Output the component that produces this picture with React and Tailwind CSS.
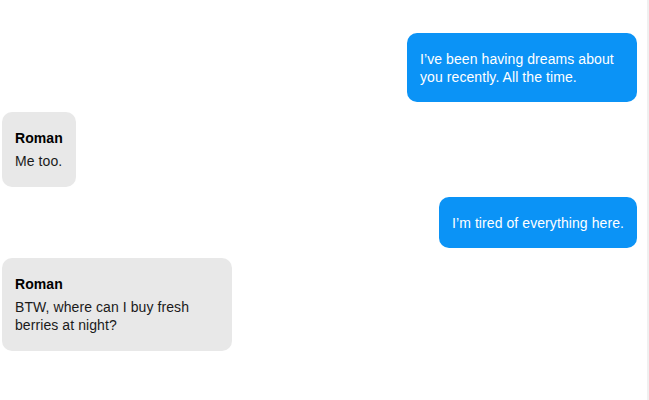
const messages = [
  { id: 1, mine: true, text: "I’ve been having dreams about you recently. All the time." },
  { id: 2, mine: false, author: "Roman", text: "Me too." },
  { id: 3, mine: true, text: "I’m tired of everything here." },
  { id: 4, mine: false, author: "Roman", text: "BTW, where can I buy fresh berries at night?" },
];

function Bubble({ message }) {
  if (message.mine) {
    return (
      <div className="flex justify-end">
        <div className="max-w-[230px] rounded-[10px] bg-[#0b93f6] px-[13px] pt-[17px] pb-[16px] text-[14px] leading-[18px] tracking-[0.08px] text-white">
          {message.text}
        </div>
      </div>
    );
  }
  return (
    <div className="flex justify-start">
      <div className="max-w-[230px] rounded-[10px] bg-[#e8e8e8] px-[13px] pt-[17px] pb-[17px] text-[14px] leading-[18px] tracking-[0.08px] text-[#1a1a1a]">
        <div className="mb-[5px] font-bold text-black">{message.author}</div>
        <div>{message.text}</div>
      </div>
    </div>
  );
}

export default function App() {
  return (
    <div className="flex h-[400px] w-[649px] bg-white font-['Liberation_Sans',Arial,sans-serif]">
      <div className="flex flex-1 flex-col gap-[10px] pt-[33px] pr-[10px] pl-[2px]">
        {messages.map((m) => (
          <Bubble key={m.id} message={m} />
        ))}
      </div>
      <div className="w-[2px] bg-[#f0f0f0]" />
    </div>
  );
}
